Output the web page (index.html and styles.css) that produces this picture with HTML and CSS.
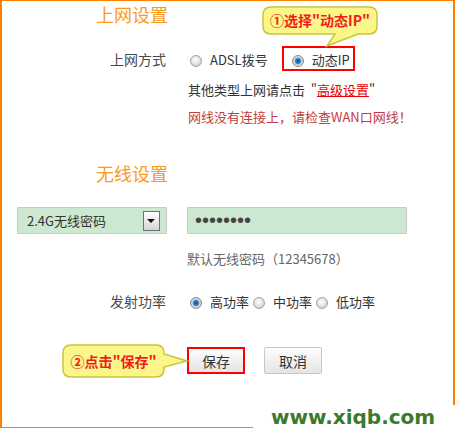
FILE: index.html
```
<!DOCTYPE html>
<html lang="zh-CN">
<head>
    <meta charset="UTF-8">
    <title>上网设置</title>
    <link rel="stylesheet" href="styles.css">
</head>
<body>
    <div class="page">
        <h2 class="section-title">上网设置</h2>

        <div class="row row-wan">
            <span class="row-label">上网方式</span>
            <div class="row-field">
                <label class="option"><input type="radio" name="wan">ADSL拨号</label>
                <label class="option option-marked"><input type="radio" name="wan" checked>动态IP</label>
            </div>
        </div>
        <p class="line">其他类型上网请点击&nbsp; "<a href="#" class="link-red">高级设置</a>"</p>
        <p class="line line-error">网线没有连接上，请检查WAN口网线！</p>

        <h2 class="section-title section-wireless">无线设置</h2>

        <div class="wifi-row">
            <div class="select-box">
                <span>2.4G无线密码</span>
                <span class="select-arrow"></span>
            </div>
            <div class="pass-box">••••••••</div>
        </div>
        <p class="line line-hint">默认无线密码（12345678）</p>

        <div class="row row-power">
            <span class="row-label">发射功率</span>
            <div class="row-field">
                <label class="option"><input type="radio" name="power" checked>高功率</label>
                <label class="option"><input type="radio" name="power">中功率</label>
                <label class="option"><input type="radio" name="power">低功率</label>
            </div>
        </div>

        <div class="buttons">
            <button class="btn btn-save">保存</button>
            <button class="btn">取消</button>
        </div>

        <!-- подсказки поверх формы -->
        <div class="callout callout-one">
            <svg width="116" height="42" viewBox="0 0 116 42">
                <path d="M9,1 H107 Q115,1 115,9 V20 Q115,28 107,28 H96 L65,40 L73,28 H9 Q1,28 1,20 V9 Q1,1 9,1 Z" fill="#fbf68a" stroke="#c9c43c" stroke-width="1.5"/>
            </svg>
            <span class="callout-text">①选择"动态IP"</span>
        </div>
        <div class="callout callout-two">
            <svg width="128" height="35" viewBox="0 0 128 35">
                <path d="M9,1 H94 Q102,1 102,9 V10 L125,17 L102,23 V25 Q102,33 94,33 H9 Q1,33 1,25 V9 Q1,1 9,1 Z" fill="#fbf68a" stroke="#c9c43c" stroke-width="1.5"/>
            </svg>
            <span class="callout-text">②点击"保存"</span>
        </div>

        <div class="watermark">www.xiqb.com</div>
    </div>
</body>
</html>
```
FILE: styles.css
```
body {
    margin: 0;
    background: #ffffff;
    font-family: "Noto Sans CJK SC", "Liberation Sans", sans-serif;
    color: #333;
}

.page {
    position: relative;
    box-sizing: border-box;
    width: 455px;
    height: 428px;
    border: 2px solid #ff8000;
    border-top-width: 1px;
    border-bottom-width: 1px;
}

.section-title {
    margin: 0 0 0 94px;
    font-size: 18px;
    line-height: 26px;
    font-weight: normal;
    color: #fa9a1e;
}

.section-wireless {
    margin-top: 34px;
}

.row {
    display: flex;
    align-items: baseline;
}

.row-wan {
    margin-top: 19px;
}

.row-power {
    margin-top: 24px;
}

.row-label {
    width: 164px;
    text-align: right;
    font-size: 14px;
    line-height: 19px;
    color: #4a4a4a;
}

.row-field {
    display: flex;
    align-items: baseline;
    margin-left: 24px;
}

.option {
    font-size: 13px;
    line-height: 19px;
    color: #333;
    margin-right: 4px;
}

.option-marked {
    margin-left: 10px;
    padding: 2px 3px 0 8px;
    border: 2px solid #f00;
}

.option input {
    -webkit-appearance: none;
    appearance: none;
    display: inline-block;
    box-sizing: border-box;
    width: 12px;
    height: 12px;
    margin: 0 8px 0 0;
    vertical-align: -2px;
    border: 1px solid #a3a3a3;
    border-radius: 50%;
    background: radial-gradient(circle at 45% 40%, #ffffff 0, #ececec 3px, #cfcfcf 6px);
}

.option input:checked {
    border-color: #8c8c8c;
    background: radial-gradient(circle at 50% 50%, #0d4a8a 0, #1f6fb8 1.5px, #4c9be0 3px, #dcdcdc 3.8px, #c4c4c4 6px);
}

.line {
    margin: 9px 0 0 186px;
    font-size: 13px;
    line-height: 19px;
    color: #333;
}

.link-red {
    color: #e60000;
}

.line-error {
    margin-top: 8px;
    color: #c43c3c;
}

.wifi-row {
    display: flex;
    margin-top: 21px;
}

.select-box,
.pass-box {
    box-sizing: border-box;
    height: 27px;
    background: #cde8d0;
    border: 1px solid #c8c8c8;
    border-radius: 1px;
}

.select-box {
    display: flex;
    align-items: center;
    justify-content: space-between;
    width: 150px;
    margin-left: 15px;
    padding: 0 6px 0 9px;
    font-size: 13px;
    color: #333;
}

.select-arrow {
    position: relative;
    box-sizing: border-box;
    width: 17px;
    height: 20px;
    border: 1px solid #707070;
    background: linear-gradient(#ffffff, #d4d4d4);
}

.select-arrow::after {
    content: '';
    position: absolute;
    left: 3px;
    top: 7px;
    border-left: 4px solid transparent;
    border-right: 4px solid transparent;
    border-top: 4px solid #111;
}

.pass-box {
    width: 220px;
    margin-left: 20px;
    padding-left: 7px;
    font-family: "Liberation Sans", sans-serif;
    font-size: 20px;
    line-height: 25px;
    color: #444;
}

.line-hint {
    margin-top: 15px;
    margin-left: 185px;
    color: #666;
}

.buttons {
    display: flex;
    gap: 19px;
    margin: 36px 0 0 185px;
}

.btn {
    box-sizing: border-box;
    width: 58px;
    height: 27px;
    padding: 0;
    border: 1px solid #c8c8c8;
    border-radius: 2px;
    background: linear-gradient(#fdfdfd, #e4e4e4);
    font-family: "Noto Sans CJK SC", sans-serif;
    font-size: 14px;
    color: #333;
}

.btn-save {
    border: 2px solid #f00;
    border-radius: 0;
}

.callout {
    position: absolute;
}

.callout svg {
    display: block;
}

.callout-one {
    left: 260px;
    top: 5px;
}

.callout-two {
    left: 60px;
    top: 343px;
}

.callout-text {
    position: absolute;
    top: 1px;
    left: 1px;
    text-align: center;
    font-size: 14px;
    font-weight: bold;
    color: #f21c1c;
    white-space: nowrap;
}

.callout-one .callout-text {
    width: 114px;
    line-height: 27px;
}

.callout-two .callout-text {
    width: 101px;
    line-height: 32px;
}

.watermark {
    position: absolute;
    left: 251px;
    top: 404px;
    width: 184px;
    height: 25px;
    padding-left: 18px;
    background: #ffffff;
    font-family: "DejaVu Sans", sans-serif;
    font-weight: bold;
    font-size: 20px;
    line-height: 25px;
    color: #3b7a2b;
}
```
